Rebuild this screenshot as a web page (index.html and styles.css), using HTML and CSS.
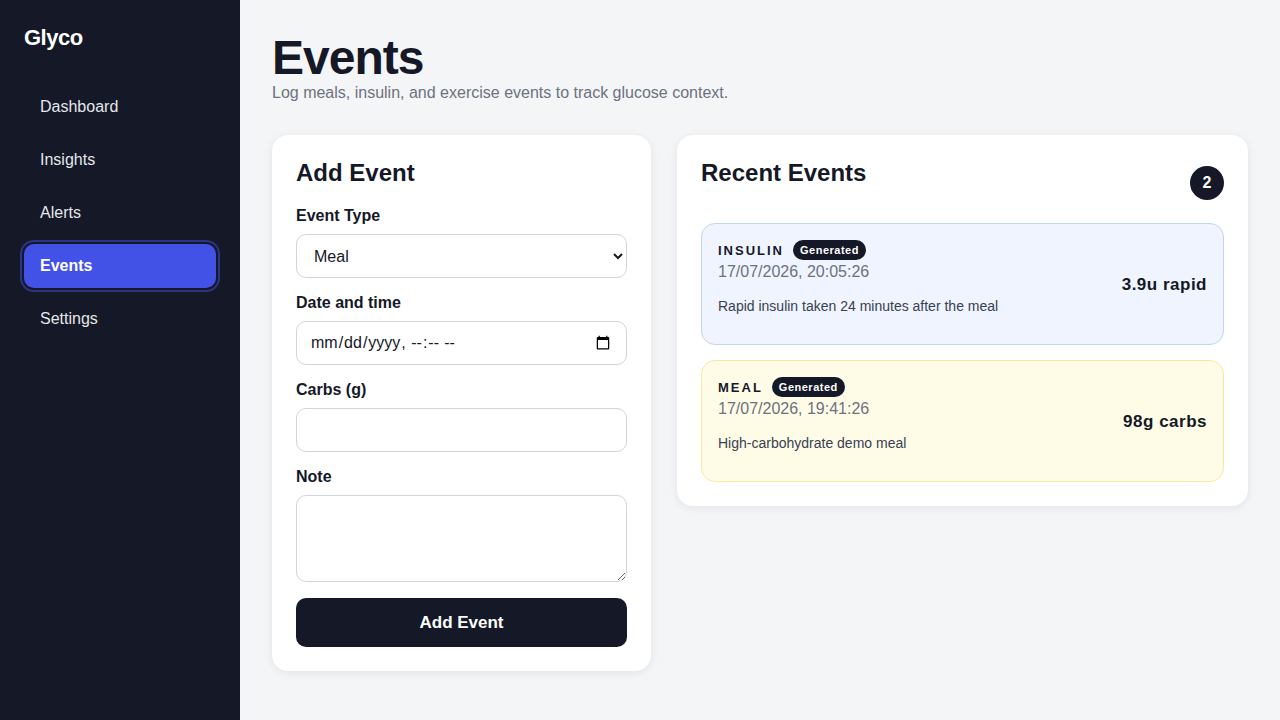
FILE: index.html
```html
<!DOCTYPE html>
<html lang="en">
<head>
    <meta charset="utf-8">
    <meta name="viewport" content="width=device-width, initial-scale=1">
    <title>Glyco - Events</title>
    <link rel="stylesheet" href="styles.css">
</head>
<body>
    <div class="app">
        <aside class="sidebar">
            <div class="logo">Glyco</div>
            <nav class="nav">
                <a href="#" class="nav-item">Dashboard</a>
                <a href="#" class="nav-item">Insights</a>
                <a href="#" class="nav-item">Alerts</a>
                <a href="#" class="nav-item active">Events</a>
                <a href="#" class="nav-item">Settings</a>
            </nav>
        </aside>
        <main class="main">
            <h1 class="page-title">Events</h1>
            <p class="page-sub">Log meals, insulin, and exercise events to track glucose context.</p>

            <div class="columns">
                <section class="card">
                    <h2 class="card-title">Add Event</h2>
                    <form class="form">
                        <div class="field">
                            <label for="type">Event Type</label>
                            <select id="type" class="control">
                                <option>Meal</option>
                                <option>Insulin</option>
                                <option>Exercise</option>
                            </select>
                        </div>
                        <div class="field">
                            <label for="when">Date and time</label>
                            <input id="when" type="datetime-local" class="control">
                        </div>
                        <div class="field">
                            <label for="carbs">Carbs (g)</label>
                            <input id="carbs" type="number" class="control">
                        </div>
                        <div class="field">
                            <label for="note">Note</label>
                            <textarea id="note" class="control note"></textarea>
                        </div>
                        <button type="button" class="submit">Add Event</button>
                    </form>
                </section>

                <section class="card">
                    <div class="card-head">
                        <h2 class="card-title">Recent Events</h2>
                        <span class="count">2</span>
                    </div>
                    <div class="event-list">
                        <div class="event insulin">
                            <div class="event-info">
                                <div class="event-top">
                                    <span class="event-type">INSULIN</span>
                                    <span class="tag">Generated</span>
                                </div>
                                <div class="event-time">17/07/2026, 20:05:26</div>
                                <p class="event-note">Rapid insulin taken 24 minutes after the meal</p>
                            </div>
                            <div class="event-value">3.9u rapid</div>
                        </div>
                        <div class="event meal">
                            <div class="event-info">
                                <div class="event-top">
                                    <span class="event-type">MEAL</span>
                                    <span class="tag">Generated</span>
                                </div>
                                <div class="event-time">17/07/2026, 19:41:26</div>
                                <p class="event-note">High-carbohydrate demo meal</p>
                            </div>
                            <div class="event-value">98g carbs</div>
                        </div>
                    </div>
                </section>
            </div>
        </main>
    </div>
</body>
</html>
```

FILE: styles.css
```css
body {
    margin: 0;
    font-family: "Liberation Sans", Arial, sans-serif;
    background: #f4f5f7;
    color: #141827;
}

.app {
    display: flex;
    min-height: 100vh;
}

.sidebar {
    width: 240px;
    flex-shrink: 0;
    background: #141827;
    padding: 24px;
    box-sizing: border-box;
}

.logo {
    color: #ffffff;
    font-size: 22px;
    font-weight: 700;
    line-height: 28px;
    letter-spacing: -0.5px;
}

.nav {
    display: flex;
    flex-direction: column;
    gap: 9px;
    margin-top: 33px;
}

.nav-item {
    display: flex;
    align-items: center;
    height: 44px;
    padding: 0 16px;
    border-radius: 10px;
    color: #e5e7eb;
    text-decoration: none;
    font-size: 16px;
}

.nav-item.active {
    background: #4352e6;
    color: #ffffff;
    font-weight: 700;
    box-shadow: 0 0 0 2px #141827, 0 0 0 4px #2b3486;
}

.main {
    flex: 1;
    padding: 33px 32px 32px 32px;
}

.page-title {
    margin: 0;
    font-size: 48px;
    line-height: 50px;
    font-weight: 700;
    letter-spacing: -1px;
}

.page-sub {
    margin: 0;
    font-size: 16px;
    line-height: 19px;
    color: #6b7280;
}

.columns {
    display: grid;
    grid-template-columns: 379fr 571fr;
    gap: 26px;
    align-items: start;
    margin-top: 33px;
}

.card {
    background: #ffffff;
    border-radius: 16px;
    padding: 24px;
    box-shadow: 0 2px 8px rgba(20, 24, 39, 0.08);
}

.card-title {
    margin: 0 0 20px;
    font-size: 24px;
    line-height: 28px;
    font-weight: 700;
}

.form {
    display: flex;
    flex-direction: column;
    gap: 16px;
}

.field {
    display: flex;
    flex-direction: column;
    gap: 9px;
}

.field label {
    font-size: 16px;
    line-height: 18px;
    font-weight: 700;
}

.control {
    height: 44px;
    box-sizing: border-box;
    border: 1px solid #d1d5db;
    border-radius: 10px;
    padding: 0 13px;
    font-family: "Liberation Sans", Arial, sans-serif;
    font-size: 16px;
    color: #141827;
    background: #ffffff;
}

.note {
    height: 87px;
    padding: 12px 13px;
    resize: vertical;
}

.submit {
    height: 49px;
    border: none;
    border-radius: 10px;
    background: #141827;
    color: #ffffff;
    font-family: "Liberation Sans", Arial, sans-serif;
    font-size: 17px;
    font-weight: 700;
    cursor: pointer;
}

.card-head {
    display: flex;
    justify-content: space-between;
    align-items: center;
}

.card-head .card-title {
    margin-bottom: 20px;
}

.count {
    width: 34px;
    height: 34px;
    border-radius: 50%;
    background: #141827;
    color: #ffffff;
    font-weight: 700;
    font-size: 16px;
    display: flex;
    align-items: center;
    justify-content: center;
}

.event-list {
    display: flex;
    flex-direction: column;
    gap: 15px;
    margin-top: 16px;
}

.event {
    display: flex;
    align-items: center;
    justify-content: space-between;
    padding: 16px 16px 14px;
    border-radius: 14px;
    border: 1px solid;
}

.event.insulin {
    background: #eff4ff;
    border-color: #c2d5f0;
}

.event.meal {
    background: #fefce7;
    border-color: #f7e9a3;
}

.event-top {
    display: flex;
    align-items: center;
    gap: 9px;
}

.event-type {
    font-size: 13px;
    font-weight: 700;
    letter-spacing: 2px;
}

.tag {
    background: #141827;
    color: #ffffff;
    font-size: 11px;
    font-weight: 700;
    padding: 4px 7px;
    border-radius: 10px;
    letter-spacing: 0.5px;
}

.event-time {
    font-size: 16px;
    line-height: 20px;
    color: #6b7280;
    margin-top: 2px;
}

.event-note {
    margin: 14px 0;
    font-size: 14px;
    line-height: 20px;
    color: #374151;
}

.event-value {
    font-size: 17px;
    font-weight: 700;
    letter-spacing: 0.5px;
}
```
